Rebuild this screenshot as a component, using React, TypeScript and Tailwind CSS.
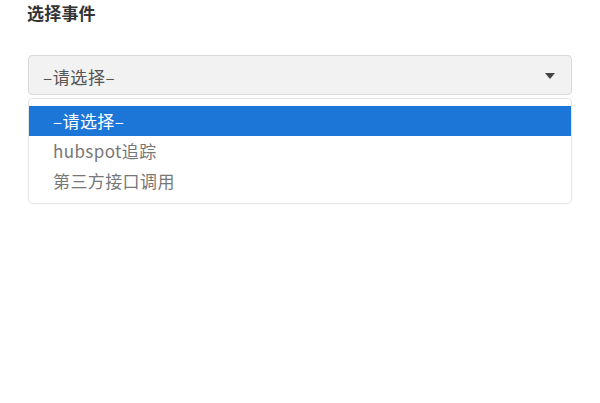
import { useState } from 'react';

const options = ['–请选择–', 'hubspot追踪', '第三方接口调用'];

export default function App() {
  const [active] = useState(0);

  return (
    <div
      className="h-[403px] w-[600px] bg-white px-[28px] text-[17px]"
      style={{ fontFamily: '"Noto Sans CJK SC", "Noto Sans", sans-serif' }}
    >
      <h1 className="-ml-[1px] text-[17px] leading-[25px] font-bold tracking-[0.2px] text-[#333]">选择事件</h1>

      <div className="mt-[30px] flex h-[40px] items-center justify-between rounded-[4px] border border-[#d9d9d9] bg-[#f2f2f2] pr-[16px] pl-[14px]">
        <span className="mt-[3px] leading-none tracking-[0.6px] text-[#555]">{options[0]}</span>
        <svg width="10" height="6" viewBox="0 0 10 6" className="mt-[2px]" aria-hidden>
          <path d="M0 0h10L5 6z" fill="#444" />
        </svg>
      </div>

      <ul className="mt-[3px] rounded-[4px] border border-[#e6e6e6] bg-white py-[7px]">
        {options.map((option, index) => (
          <li
            key={option}
            className={
              index === active
                ? 'flex h-[30px] items-center bg-[#1c76d8] pl-[24px] tracking-[0.4px] text-white'
                : 'flex h-[30px] items-center pl-[24px] tracking-[0.4px] text-[#777]'
            }
          >
            {option}
          </li>
        ))}
      </ul>
    </div>
  );
}
